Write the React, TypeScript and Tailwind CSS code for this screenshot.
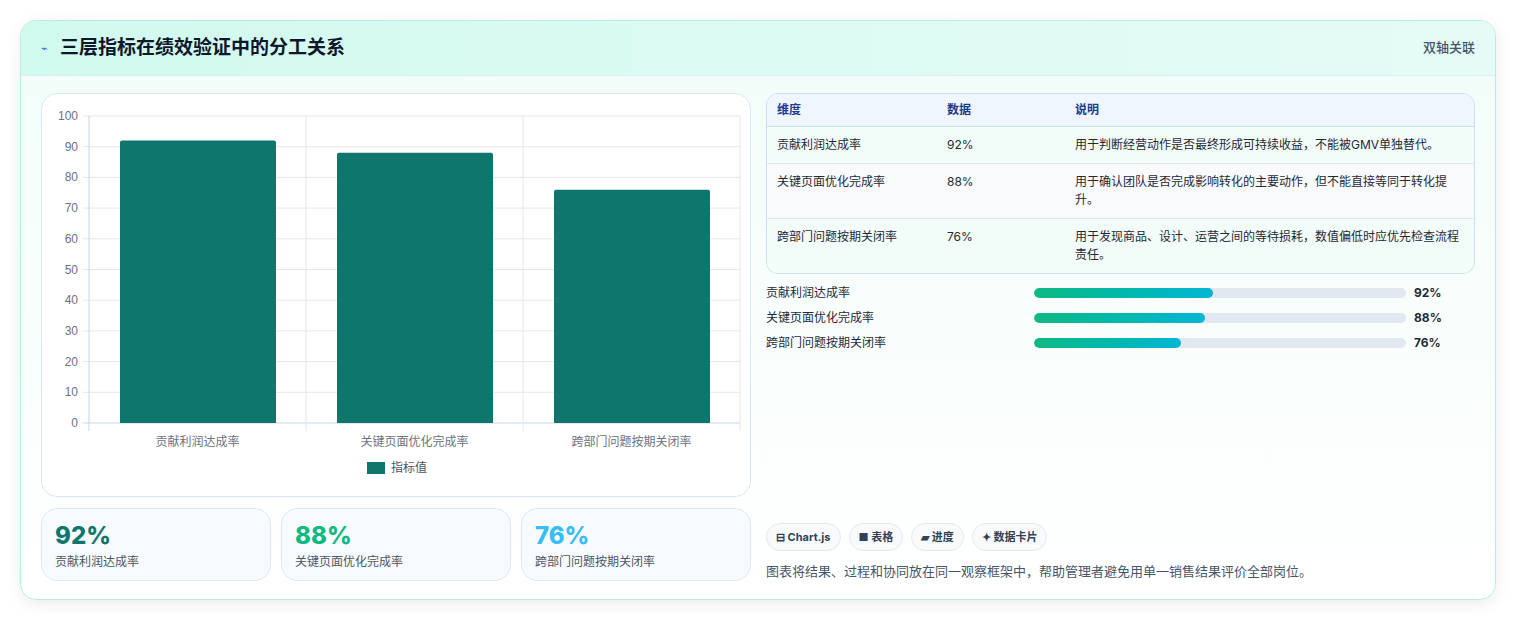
import React from "react";

const rows = [
  { n: "贡献利润达成率", v: 92, d: "用于判断经营动作是否最终形成可持续收益，不能被GMV单独替代。", w: "48%" },
  { n: "关键页面优化完成率", v: 88, d: "用于确认团队是否完成影响转化的主要动作，但不能直接等同于转化提升。", w: "46%" },
  { n: "跨部门问题按期关闭率", v: 76, d: "用于发现商品、设计、运营之间的等待损耗，数值偏低时应优先检查流程责任。", w: "39.5%" },
];

function Chart() {
  const x0 = 47, x1 = 698, yTop = 22, yBot = 329;
  const h = yBot - yTop;
  const cw = (x1 - x0) / 3;
  return (
    <svg width="710" height="403" className="block">
      {Array.from({ length: 11 }).map((_, i) => {
        const y = yBot - (h * i) / 10;
        return (
          <g key={i}>
            <line x1={x0 - 6} x2={x1} y1={y} y2={y} stroke={i === 0 ? "#cbd5e1" : "#e5e7eb"} />
            <text x={x0 - 11} y={y + 4} textAnchor="end" fontSize="12" fill="#6b7280" fontFamily="Liberation Sans, sans-serif">{i * 10}</text>
          </g>
        );
      })}
      {[0, 1, 2, 3].map((i) => (
        <line key={i} x1={x0 + cw * i} x2={x0 + cw * i} y1={yTop} y2={yBot + 8} stroke={i === 0 ? "#cbd5e1" : "#e5e7eb"} />
      ))}
      {rows.map((r, i) => {
        const bh = (h * r.v) / 100;
        const bx = x0 + cw * i + 31;
        return (
          <g key={i}>
            <path d={`M${bx} ${yBot}V${yBot - bh + 2}q0 -2 2 -2h152q2 0 2 2V${yBot}z`} fill="#0f766e" />
            <text x={x0 + cw * i + cw / 2} y={352} textAnchor="middle" fontSize="12" fill="#6b7280" fontFamily="Noto Sans CJK SC, sans-serif">{r.n}</text>
          </g>
        );
      })}
      <rect x="325" y="368" width="18" height="12" fill="#0f766e" />
      <text x="349" y="378" fontSize="12" fill="#4b5563" fontFamily="Noto Sans CJK SC, sans-serif">指标值</text>
    </svg>
  );
}

export default function App() {
  return (
    <div className="w-[1516px] h-[620px] bg-white p-5 pb-0" style={{ fontFamily: "Inter, 'Noto Sans CJK SC', sans-serif" }}>
      <div className="rounded-2xl border border-[#b9ece3] shadow-[0_4px_16px_rgba(0,0,0,0.08)] overflow-hidden bg-gradient-to-b from-[#f1fdf9] to-white">
        <div className="h-[55px] flex items-center justify-between px-5 bg-gradient-to-r from-[#d1faef] to-[#e6fbf6] border-b border-[#d5f3ec]">
          <div className="flex items-center gap-3">
            <span className="text-[11px] text-[#2563eb]">⌁</span>
            <span className="text-[19px] font-bold text-[#0f172a]">三层指标在绩效验证中的分工关系</span>
          </div>
          <span className="text-[13px] text-[#475569] font-medium">双轴关联</span>
        </div>
        <div className="flex gap-[15px] px-5 pt-[17px] pb-[18px]">
          <div className="w-[710px] flex flex-col gap-[11px]">
            <div className="h-[404px] rounded-2xl border border-[#dbe7ef] bg-white overflow-hidden"><Chart /></div>
            <div className="flex gap-[10px]">
              {[["92%", "text-[#0f766e]"], ["88%", "text-[#10b981]"], ["76%", "text-[#38bdf8]"]].map(([v, c], i) => (
                <div key={i} className="flex-1 h-[73px] rounded-2xl border border-[#dbe7f3] bg-[#f8fbfe] px-[13px] pt-[12px]">
                  <div className={`text-[24px] leading-[30px] font-extrabold ${c}`}>{v}</div>
                  <div className="text-[12px] text-[#4b5563] mt-[2px]">{rows[i].n}</div>
                </div>
              ))}
            </div>
          </div>
          <div className="w-[711px] flex flex-col">
            <div className="rounded-xl border border-[#cfdde8] overflow-hidden text-[12px] text-[#1f2937]">
              <div className="flex h-[33px] items-center bg-[#eff6ff] border-b border-[#cfdde8] font-bold text-[#1e3a8a]">
                <div className="w-[180px] pl-[10px]">维度</div><div className="w-[128px]">数据</div><div>说明</div>
              </div>
              {rows.map((r, i) => (
                <div key={i} className={`flex py-[9px] ${i === 1 ? "bg-[#f8fafc]" : "bg-[#f2fcf8]"} ${i < 2 ? "border-b border-[#e2e8f0]" : ""}`}>
                  <div className="w-[180px] pl-[10px] leading-[18px]">{r.n}</div>
                  <div className="w-[128px] leading-[18px]">{r.v}%</div>
                  <div className="flex-1 pr-[14px] leading-[18px]">{r.d}</div>
                </div>
              ))}
            </div>
            <div className="mt-[10px] flex flex-col gap-[7px]">
              {rows.map((r, i) => (
                <div key={i} className="flex items-center h-[18px] text-[12px]">
                  <div className="w-[268px] text-[#1f2937]">{r.n}</div>
                  <div className="w-[372px] h-[10px] rounded-full bg-[#e2e8f0] overflow-hidden">
                    <div className="h-full rounded-full bg-gradient-to-r from-[#10b981] to-[#06b6d4]" style={{ width: r.w }} />
                  </div>
                  <div className="ml-2 font-bold text-[#1f2937]">{r.v}%</div>
                </div>
              ))}
            </div>
            <div className="mt-auto">
              <div className="flex gap-[8px]">
                {["⊟ Chart.js", "■ 表格", "▰ 进度", "✦ 数据卡片"].map((t) => (
                  <span key={t} className="h-[28px] px-[9px] rounded-full border border-[#e5e7eb] bg-[#f8fafc] text-[11px] font-bold text-[#334155] flex items-center">{t}</span>
                ))}
              </div>
              <div className="mt-[10px] text-[13px] text-[#475569] leading-[20px]">图表将结果、过程和协同放在同一观察框架中，帮助管理者避免用单一销售结果评价全部岗位。</div>
            </div>
          </div>
        </div>
      </div>
    </div>
  );
}
